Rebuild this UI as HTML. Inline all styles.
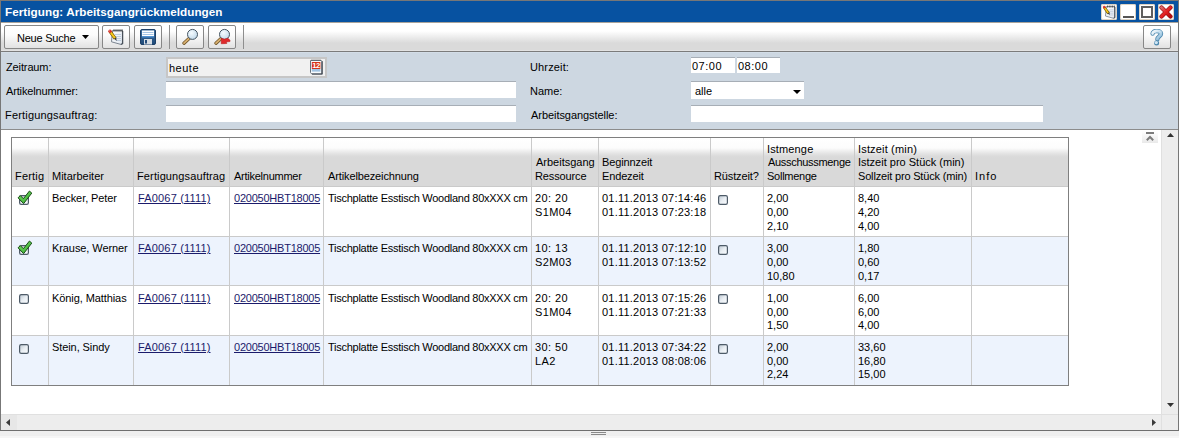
<!DOCTYPE html><html><head><meta charset="utf-8"><style>
*{margin:0;padding:0;box-sizing:border-box}
html,body{width:1179px;height:438px;overflow:hidden;background:#efefef;font-family:"Liberation Sans",sans-serif;font-size:11px;color:#000}
div,svg{position:absolute}
.t{white-space:nowrap;line-height:13px;height:13px}
.lk{color:#1b1b6b;text-decoration:underline}
.tb{height:24px;border:1px solid #878787;border-radius:2px;background:linear-gradient(#fff 0%,#fcfcfc 40%,#e2e2e2 100%)}
.wb{top:4px;width:16px;height:16px;background:#fff;border-radius:2px;box-shadow:inset 0 0 0 1px #ddd3c3}
</style></head><body>
<div style="left:0px;top:0px;width:1179px;height:431px;background:#777"></div>
<div style="left:1px;top:1px;width:1177px;height:21px;background:#0752a1"></div>
<div class="t" style="left:5px;top:5px;color:#fff;font-weight:bold;font-size:11.7px;line-height:14px;height:14px;letter-spacing:0.05px">Fertigung: Arbeitsgangrückmeldungen</div>
<div class="wb" style="left:1101px;top:4px;width:16px;height:16px;"></div>
<div class="wb" style="left:1120px;top:4px;width:16px;height:16px;"></div>
<div class="wb" style="left:1139px;top:4px;width:16px;height:16px;"></div>
<div class="wb" style="left:1158px;top:4px;width:16px;height:16px;"></div>
<div style="left:1123px;top:16px;width:11px;height:2px;background:#555"></div>
<div style="left:1141px;top:6px;width:12px;height:12px;border:2px solid #5e5e5e"></div>
<svg style="left:1159px;top:5px" width="14" height="14" viewBox="0 0 14 14"><defs><linearGradient id="xr" x1="0" y1="0" x2="1" y2="1"><stop offset="0" stop-color="#d86a6a"/><stop offset="0.5" stop-color="#e52222"/><stop offset="1" stop-color="#b30d0d"/></linearGradient></defs><path d="M2.5 2.5 L11.5 11.5 M11.5 2.5 L2.5 11.5" stroke="#9a0d0d" stroke-width="4.2" stroke-linecap="round"/><path d="M2.5 2.5 L11.5 11.5 M11.5 2.5 L2.5 11.5" stroke="url(#xr)" stroke-width="3" stroke-linecap="round"/></svg>
<svg style="left:1101px;top:4px" width="16" height="16" viewBox="-1.8 -1.5 19 19"><defs><linearGradient id="np1101" x1="0" y1="0" x2="1" y2="1"><stop offset="0" stop-color="#ffffff"/><stop offset="1" stop-color="#dfe6ef"/></linearGradient></defs><path d="M4.5 1.5 L14.5 1.5 L14.5 14.2 L13.2 15.5 L3.5 12.8 Z" fill="url(#np1101)" stroke="#7b848f" stroke-width="1"/><path d="M14.6 2 L14.6 14.4 L13.2 15.6" stroke="#48505a" stroke-width="1.3" fill="none"/><path d="M7 5.5h6M7 7.5h6M7 9.5h6M8 11.5h5" stroke="#b4c4d8" stroke-width="0.8"/><path d="M6 0.3v2.4M8 0.3v2.4M10 0.3v2.4M12 0.3v2.4M14 0.3v2.4" stroke="#3c3c3c" stroke-width="1"/><path d="M2.2 2.6 L7.2 9.6" stroke="#6e5400" stroke-width="3.3"/><path d="M2.2 2.6 L7.2 9.6" stroke="#f7c81c" stroke-width="1.9"/><path d="M6 9.4 L8.6 11.9 L8.2 8.4 Z" fill="#3a3a3a"/><circle cx="2" cy="2.2" r="1.7" fill="#d42f28"/><circle cx="1.6" cy="1.8" r="0.6" fill="#f08a80"/></svg>
<div style="left:1px;top:22px;width:1177px;height:30px;background:linear-gradient(#a9a39a 0px,#a9a39a 1px,#fff 1px,#fff 9px,#dadada 21px,#dadada 28px,#e2e2e2 28px,#e2e2e2 29px,#7b7b7b 29px,#7b7b7b 30px)"></div>
<div class="tb" style="left:4px;top:25px;width:95px;height:24px;"></div>
<div id="T0" class="t" style="left:17.00px;top:32px;letter-spacing:-0.222px;">Neue Suche</div>
<svg style="left:82px;top:35px" width="7" height="4" viewBox="0 0 7 4"><path d="M0 0h7L3.5 4z" fill="#000"/></svg>
<div class="tb" style="left:102px;top:25px;width:28px;height:24px;"></div>
<svg style="left:108px;top:29px" width="16" height="16" viewBox="0 0 16 16"><defs><linearGradient id="np108" x1="0" y1="0" x2="1" y2="1"><stop offset="0" stop-color="#ffffff"/><stop offset="1" stop-color="#dfe6ef"/></linearGradient></defs><path d="M4.5 1.5 L14.5 1.5 L14.5 14.2 L13.2 15.5 L3.5 12.8 Z" fill="url(#np108)" stroke="#7b848f" stroke-width="1"/><path d="M14.6 2 L14.6 14.4 L13.2 15.6" stroke="#48505a" stroke-width="1.3" fill="none"/><path d="M7 5.5h6M7 7.5h6M7 9.5h6M8 11.5h5" stroke="#b4c4d8" stroke-width="0.8"/><path d="M6 0.3v2.4M8 0.3v2.4M10 0.3v2.4M12 0.3v2.4M14 0.3v2.4" stroke="#3c3c3c" stroke-width="1"/><path d="M2.2 2.6 L7.2 9.6" stroke="#6e5400" stroke-width="3.3"/><path d="M2.2 2.6 L7.2 9.6" stroke="#f7c81c" stroke-width="1.9"/><path d="M6 9.4 L8.6 11.9 L8.2 8.4 Z" fill="#3a3a3a"/><circle cx="2" cy="2.2" r="1.7" fill="#d42f28"/><circle cx="1.6" cy="1.8" r="0.6" fill="#f08a80"/></svg>
<div class="tb" style="left:134px;top:25px;width:28px;height:24px;"></div>
<svg style="left:140px;top:29px" width="16" height="16" viewBox="0 0 16 16"><defs><linearGradient id="fl" x1="0" y1="0" x2="0" y2="1"><stop offset="0" stop-color="#3d6fa0"/><stop offset="1" stop-color="#1f4a78"/></linearGradient></defs><rect x="0.5" y="0.5" width="15" height="15" rx="1.5" fill="url(#fl)" stroke="#1d3f66"/><rect x="2" y="1.5" width="12" height="6.5" fill="#fff"/><path d="M2.5 3.5h11M2.5 5.5h11" stroke="#9cc0e4" stroke-width="0.9"/><rect x="2" y="7" width="12" height="1.5" fill="#4f90d0"/><rect x="4" y="10" width="8" height="5.5" fill="#d7dde3"/><rect x="5" y="11" width="2" height="3.5" fill="#234c7a"/></svg>
<div style="left:169px;top:25px;width:1px;height:24px;background:#8e8e8e"></div>
<div class="tb" style="left:176px;top:25px;width:28px;height:24px;"></div>
<svg style="left:182px;top:28px" width="18" height="18" viewBox="0 0 18 18"><defs><radialGradient id="lg1" cx="0.4" cy="0.35" r="0.7"><stop offset="0" stop-color="#f6fcff"/><stop offset="1" stop-color="#c0d8ea"/></radialGradient></defs><path d="M7.6 10 L2 15.2" stroke="#6e5328" stroke-width="3.3" stroke-linecap="round"/><path d="M7.6 10 L2 15.2" stroke="#d8b070" stroke-width="1.8" stroke-linecap="round"/><circle cx="10.5" cy="6.4" r="5" fill="url(#lg1)" stroke="#465562" stroke-width="1"/></svg>
<div class="tb" style="left:208px;top:25px;width:28px;height:24px;"></div>
<svg style="left:214px;top:28px" width="18" height="18" viewBox="0 0 18 18"><defs><radialGradient id="lg2" cx="0.4" cy="0.35" r="0.7"><stop offset="0" stop-color="#f6fcff"/><stop offset="1" stop-color="#c0d8ea"/></radialGradient></defs><path d="M7.6 10 L2 15.2" stroke="#6e5328" stroke-width="3.3" stroke-linecap="round"/><path d="M7.6 10 L2 15.2" stroke="#d8b070" stroke-width="1.8" stroke-linecap="round"/><circle cx="10.5" cy="6.4" r="5" fill="url(#lg2)" stroke="#465562" stroke-width="1"/><path d="M7.2 10.1 C8.5 10.6 9.5 11.1 10.3 11.1 C11.6 11.1 12.3 10.2 13.6 10.3 C14.6 10.5 15.4 11.5 16 12.3 L16 13.6 L12.2 14 L12.9 15.5 C11 15.6 9 15.7 7.2 15.8 Z" fill="#df2a2c" stroke="#b21818" stroke-width="0.5"/></svg>
<div style="left:243px;top:25px;width:1px;height:24px;background:#8e8e8e"></div>
<div class="tb" style="left:1143px;top:25px;width:28px;height:24px;"></div>
<svg style="left:1150px;top:29px" width="14" height="17" viewBox="0 0 14 17"><defs><linearGradient id="hq" x1="0" y1="0" x2="1" y2="1"><stop offset="0" stop-color="#f4f9fc"/><stop offset="0.5" stop-color="#c2def0"/><stop offset="1" stop-color="#7fb0d0"/></linearGradient></defs><path d="M2.6 4.6 C2.6 1.2 11 1 11 4.8 C11 7.4 7.4 7.6 7.4 10.2" stroke="#4a86ad" stroke-width="4.4" fill="none" stroke-linecap="round"/><path d="M2.6 4.6 C2.6 1.2 11 1 11 4.8 C11 7.4 7.4 7.6 7.4 10.2" stroke="url(#hq)" stroke-width="2.8" fill="none" stroke-linecap="round"/><circle cx="6.6" cy="13.9" r="2.5" fill="#4a86ad"/><circle cx="6.3" cy="13.6" r="1.7" fill="#cfe5f3"/></svg>
<div style="left:1px;top:52px;width:1177px;height:77px;background:linear-gradient(#d3dde7 0px,#d3dde7 1px,#cdd7e1 1px)"></div>
<div style="left:1px;top:129px;width:1177px;height:1px;background:#8c8c8c"></div>
<div id="T1" class="t" style="left:6.00px;top:61px;letter-spacing:-0.125px;">Zeitraum:</div>
<div id="T2" class="t" style="left:6.00px;top:85px;letter-spacing:-0.154px;">Artikelnummer:</div>
<div id="T3" class="t" style="left:5.00px;top:109px;letter-spacing:0.176px;">Fertigungsauftrag:</div>
<div style="left:166px;top:57px;width:161px;height:21px;background:#f1f1f1;border:2px solid #c6c6c6"></div>
<div id="T4" class="t" style="left:169.00px;top:62px;letter-spacing:0.500px;">heute</div>
<svg style="left:310px;top:59px" width="13" height="16" viewBox="0 0 13 16"><path d="M0.5 1.5 h10.8 l0.8 0.8 v12.7 h-10.3 l-1.3 -1.3 z" fill="#f8fafc" stroke="#6a737c" stroke-width="1"/><path d="M12 2.2 v12.8 h-10" stroke="#3e4650" stroke-width="1.2" fill="none"/><rect x="1.8" y="3" width="8.6" height="7" fill="#d8341a"/><text x="6.1" y="9.4" font-family="Liberation Sans" font-weight="bold" font-size="7.6" fill="#fff" text-anchor="middle" letter-spacing="-0.3">12</text><rect x="1.8" y="10" width="8.6" height="2.6" fill="#9fc3e3"/><path d="M1.5 1h9" stroke="#555" stroke-width="1.1" stroke-dasharray="1 1"/></svg>
<div style="left:166px;top:81px;width:350px;height:17px;background:#fff;border-top:1px solid #a7aeb6"></div>
<div style="left:166px;top:105px;width:350px;height:17px;background:#fff;border-top:1px solid #a7aeb6"></div>
<div id="T5" class="t" style="left:530.00px;top:61px;letter-spacing:0.143px;">Uhrzeit:</div>
<div id="T6" class="t" style="left:530.00px;top:85px;letter-spacing:0.000px;">Name:</div>
<div id="T7" class="t" style="left:531.00px;top:109px;letter-spacing:-0.059px;">Arbeitsgangstelle:</div>
<div style="left:691px;top:57px;width:44px;height:16px;background:#fff;border-top:1px solid #a7aeb6"></div>
<div id="T8" class="t" style="left:692.00px;top:60px;letter-spacing:0.500px;">07:00</div>
<div style="left:737px;top:57px;width:43px;height:16px;background:#fff;border-top:1px solid #a7aeb6"></div>
<div id="T9" class="t" style="left:738.00px;top:60px;letter-spacing:0.500px;">08:00</div>
<div style="left:691px;top:81px;width:113px;height:18px;background:#fff;border-top:1px solid #a7aeb6"></div>
<div id="T10" class="t" style="left:695.00px;top:85px;letter-spacing:0.000px;">alle</div>
<svg style="left:793px;top:90px" width="8" height="4" viewBox="0 0 8 4"><path d="M0 0h8L4 4z" fill="#000"/></svg>
<div style="left:691px;top:105px;width:352px;height:17px;background:#fff;border-top:1px solid #a7aeb6"></div>
<div style="left:1px;top:130px;width:1177px;height:284px;background:#fff"></div>
<div style="left:1161px;top:130px;width:17px;height:284px;background:#ededed;border-left:1px solid #e0e0e0"></div>
<svg style="left:1167px;top:133px" width="7" height="4" viewBox="0 0 7 4"><path d="M0 4h7L3.5 0z" fill="#333"/></svg>
<svg style="left:1167px;top:403px" width="7" height="4" viewBox="0 0 7 4"><path d="M0 0h7L3.5 4z" fill="#333"/></svg>
<div style="left:1142px;top:131px;width:16px;height:12px;background:linear-gradient(#fff,#e9e9e9)"></div>
<div style="left:1146px;top:132px;width:8px;height:2px;background:#7c7c7c"></div>
<svg style="left:1146px;top:135px" width="8" height="6" viewBox="0 0 8 6"><path d="M0.8 5.2 L4 2 L7.2 5.2" stroke="#7c7c7c" stroke-width="2" fill="none"/></svg>
<div style="left:1px;top:414px;width:1177px;height:16px;background:#ededed;border-top:1px solid #e0e0e0"></div>
<div style="left:1px;top:415px;width:16px;height:15px;background:#e7e7e7"></div>
<svg style="left:6px;top:419px" width="4" height="7" viewBox="0 0 4 7"><path d="M4 0v7L0 3.5z" fill="#3a3a3a"/></svg>
<svg style="left:1152px;top:419px" width="4" height="7" viewBox="0 0 4 7"><path d="M0 0v7L4 3.5z" fill="#3a3a3a"/></svg>
<div style="left:1161px;top:414px;width:17px;height:16px;background:#ededed;border-left:1px solid #e0e0e0;border-top:1px solid #e0e0e0"></div>
<div style="left:0px;top:430px;width:1179px;height:1px;background:#6f6f6f"></div>
<div style="left:0px;top:431px;width:1179px;height:7px;background:linear-gradient(#efefef 0px,#efefef 5px,#f6f6f6 5px)"></div>
<div style="left:591px;top:432px;width:15px;height:1px;background:#8a8a8a"></div>
<div style="left:591px;top:434px;width:15px;height:1px;background:#8a8a8a"></div>
<div style="left:12px;top:138px;width:1056px;height:48px;background:linear-gradient(#fff 0px,#fcfcfc 10px,#e6e6e6 15px,#dbdbdb 18px,#d9d9d9 20px,#d9d9d9 48px)"></div>
<div style="left:12px;top:187px;width:1056px;height:49px;background:#fff"></div>
<div style="left:12px;top:237px;width:1056px;height:48px;background:#edf3fd"></div>
<div style="left:12px;top:286px;width:1056px;height:49px;background:#fff"></div>
<div style="left:12px;top:336px;width:1056px;height:49px;background:#edf3fd"></div>
<div style="left:48px;top:138px;width:1px;height:247px;background:#cacaca"></div>
<div style="left:133px;top:138px;width:1px;height:247px;background:#cacaca"></div>
<div style="left:229px;top:138px;width:1px;height:247px;background:#cacaca"></div>
<div style="left:323px;top:138px;width:1px;height:247px;background:#cacaca"></div>
<div style="left:531px;top:138px;width:1px;height:247px;background:#cacaca"></div>
<div style="left:598px;top:138px;width:1px;height:247px;background:#cacaca"></div>
<div style="left:710px;top:138px;width:1px;height:247px;background:#cacaca"></div>
<div style="left:763px;top:138px;width:1px;height:247px;background:#cacaca"></div>
<div style="left:854px;top:138px;width:1px;height:247px;background:#cacaca"></div>
<div style="left:971px;top:138px;width:1px;height:247px;background:#cacaca"></div>
<div style="left:12px;top:186px;width:1056px;height:1px;background:#cacaca"></div>
<div style="left:12px;top:236px;width:1056px;height:1px;background:#cacaca"></div>
<div style="left:12px;top:285px;width:1056px;height:1px;background:#cacaca"></div>
<div style="left:12px;top:335px;width:1056px;height:1px;background:#cacaca"></div>
<div style="left:11px;top:137px;width:1058px;height:249px;border:1px solid #7f7f7f"></div>
<div id="T11" class="t" style="left:15.00px;top:170px;letter-spacing:0.200px;">Fertig</div>
<div id="T12" class="t" style="left:52.00px;top:170px;letter-spacing:0.000px;">Mitarbeiter</div>
<div id="T13" class="t" style="left:137.00px;top:170px;letter-spacing:0.125px;">Fertigungsauftrag</div>
<div id="T14" class="t" style="left:234.00px;top:170px;letter-spacing:-0.250px;">Artikelnummer</div>
<div id="T15" class="t" style="left:328.00px;top:170px;letter-spacing:-0.118px;">Artikelbezeichnung</div>
<div id="T16" class="t" style="left:536.00px;top:156px;letter-spacing:0.000px;">Arbeitsgang</div>
<div id="T17" class="t" style="left:535.00px;top:170px;letter-spacing:-0.125px;">Ressource</div>
<div id="T18" class="t" style="left:602.00px;top:156px;letter-spacing:-0.111px;">Beginnzeit</div>
<div id="T19" class="t" style="left:602.00px;top:170px;letter-spacing:-0.143px;">Endezeit</div>
<div id="T20" class="t" style="left:714.00px;top:170px;letter-spacing:-0.125px;">Rüstzeit?</div>
<div id="T21" class="t" style="left:767.00px;top:143px;letter-spacing:0.143px;">Istmenge</div>
<div id="T22" class="t" style="left:768.00px;top:156px;letter-spacing:-0.308px;">Ausschussmenge</div>
<div id="T23" class="t" style="left:767.00px;top:170px;letter-spacing:-0.250px;">Sollmenge</div>
<div id="T24" class="t" style="left:858.00px;top:143px;letter-spacing:0.167px;">Istzeit (min)</div>
<div id="T25" class="t" style="left:858.00px;top:156px;letter-spacing:0.000px;">Istzeit pro Stück (min)</div>
<div id="T26" class="t" style="left:858.00px;top:170px;letter-spacing:-0.174px;">Sollzeit pro Stück (min)</div>
<div id="T27" class="t" style="left:975.00px;top:170px;letter-spacing:1.000px;">Info</div>
<svg style="left:19px;top:195px" width="10" height="10" viewBox="0 0 10 10"><defs><linearGradient id="cbg" x1="0" y1="0" x2="1" y2="1"><stop offset="0" stop-color="#bcc6d0"/><stop offset="0.5" stop-color="#e9eef3"/><stop offset="1" stop-color="#fbfdff"/></linearGradient></defs><rect x="0.6" y="0.6" width="8.8" height="8.8" rx="1.6" fill="url(#cbg)" stroke="#4e5b68" stroke-width="1.2"/></svg>
<svg style="left:16px;top:189px" width="17" height="16" viewBox="0 0 17 16"><defs><linearGradient id="ckg" x1="0" y1="0" x2="1" y2="1"><stop offset="0" stop-color="#7fe06a"/><stop offset="1" stop-color="#2fa82a"/></linearGradient></defs><path d="M2.05 8.8 L4.3 6.6 L7.4 9.7 L13.4 2.05 L15.8 4.1 L7.6 14.6 Z" fill="url(#ckg)" stroke="#174a14" stroke-width="1" stroke-linejoin="round"/></svg>
<svg style="left:718px;top:195px" width="10" height="10" viewBox="0 0 10 10"><defs><linearGradient id="cbg" x1="0" y1="0" x2="1" y2="1"><stop offset="0" stop-color="#bcc6d0"/><stop offset="0.5" stop-color="#e9eef3"/><stop offset="1" stop-color="#fbfdff"/></linearGradient></defs><rect x="0.6" y="0.6" width="8.8" height="8.8" rx="1.6" fill="url(#cbg)" stroke="#4e5b68" stroke-width="1.2"/></svg>
<div id="T28" class="t" style="left:52.00px;top:192px;letter-spacing:-0.083px;">Becker, Peter</div>
<div id="T29" class="t lk" style="left:138.00px;top:192px;letter-spacing:0.167px;">FA0067 (1111)</div>
<div id="T30" class="t lk" style="left:234.00px;top:192px;letter-spacing:-0.231px;">020050HBT18005</div>
<div id="T31" class="t" style="left:328.00px;top:192px;letter-spacing:-0.263px;">Tischplatte Esstisch Woodland 80xXXX cm</div>
<div id="T32" class="t" style="left:535.00px;top:192px;letter-spacing:0.400px;">20: 20</div>
<div id="T33" class="t" style="left:535.00px;top:206px;letter-spacing:0.400px;">S1M04</div>
<div id="T34" class="t" style="left:602.00px;top:192px;letter-spacing:0.222px;">01.11.2013 07:14:46</div>
<div id="T35" class="t" style="left:602.00px;top:206px;letter-spacing:0.222px;">01.11.2013 07:23:18</div>
<div id="T36" class="t" style="left:767.00px;top:192px;letter-spacing:0.000px;">2,00</div>
<div id="T37" class="t" style="left:767.00px;top:206px;letter-spacing:0.000px;">0,00</div>
<div id="T38" class="t" style="left:767.00px;top:220px;letter-spacing:0.000px;">2,10</div>
<div id="T39" class="t" style="left:858.00px;top:192px;letter-spacing:0.000px;">8,40</div>
<div id="T40" class="t" style="left:858.00px;top:206px;letter-spacing:0.000px;">4,20</div>
<div id="T41" class="t" style="left:858.00px;top:220px;letter-spacing:0.000px;">4,00</div>
<svg style="left:19px;top:245px" width="10" height="10" viewBox="0 0 10 10"><defs><linearGradient id="cbg" x1="0" y1="0" x2="1" y2="1"><stop offset="0" stop-color="#bcc6d0"/><stop offset="0.5" stop-color="#e9eef3"/><stop offset="1" stop-color="#fbfdff"/></linearGradient></defs><rect x="0.6" y="0.6" width="8.8" height="8.8" rx="1.6" fill="url(#cbg)" stroke="#4e5b68" stroke-width="1.2"/></svg>
<svg style="left:16px;top:239px" width="17" height="16" viewBox="0 0 17 16"><defs><linearGradient id="ckg" x1="0" y1="0" x2="1" y2="1"><stop offset="0" stop-color="#7fe06a"/><stop offset="1" stop-color="#2fa82a"/></linearGradient></defs><path d="M2.05 8.8 L4.3 6.6 L7.4 9.7 L13.4 2.05 L15.8 4.1 L7.6 14.6 Z" fill="url(#ckg)" stroke="#174a14" stroke-width="1" stroke-linejoin="round"/></svg>
<svg style="left:718px;top:245px" width="10" height="10" viewBox="0 0 10 10"><defs><linearGradient id="cbg" x1="0" y1="0" x2="1" y2="1"><stop offset="0" stop-color="#bcc6d0"/><stop offset="0.5" stop-color="#e9eef3"/><stop offset="1" stop-color="#fbfdff"/></linearGradient></defs><rect x="0.6" y="0.6" width="8.8" height="8.8" rx="1.6" fill="url(#cbg)" stroke="#4e5b68" stroke-width="1.2"/></svg>
<div id="T42" class="t" style="left:52.00px;top:242px;letter-spacing:-0.083px;">Krause, Werner</div>
<div id="T43" class="t lk" style="left:138.00px;top:242px;letter-spacing:0.167px;">FA0067 (1111)</div>
<div id="T44" class="t lk" style="left:234.00px;top:242px;letter-spacing:-0.231px;">020050HBT18005</div>
<div id="T45" class="t" style="left:328.00px;top:242px;letter-spacing:-0.263px;">Tischplatte Esstisch Woodland 80xXXX cm</div>
<div id="T46" class="t" style="left:535.00px;top:242px;letter-spacing:0.400px;">10: 13</div>
<div id="T47" class="t" style="left:535.00px;top:256px;letter-spacing:0.400px;">S2M03</div>
<div id="T48" class="t" style="left:602.00px;top:242px;letter-spacing:0.222px;">01.11.2013 07:12:10</div>
<div id="T49" class="t" style="left:602.00px;top:256px;letter-spacing:0.222px;">01.11.2013 07:13:52</div>
<div id="T50" class="t" style="left:767.00px;top:242px;letter-spacing:0.000px;">3,00</div>
<div id="T51" class="t" style="left:767.00px;top:256px;letter-spacing:0.000px;">0,00</div>
<div id="T52" class="t" style="left:767.00px;top:270px;letter-spacing:0.000px;">10,80</div>
<div id="T53" class="t" style="left:858.00px;top:242px;letter-spacing:0.000px;">1,80</div>
<div id="T54" class="t" style="left:858.00px;top:256px;letter-spacing:0.000px;">0,60</div>
<div id="T55" class="t" style="left:858.00px;top:270px;letter-spacing:0.000px;">0,17</div>
<svg style="left:19px;top:294px" width="10" height="10" viewBox="0 0 10 10"><defs><linearGradient id="cbg" x1="0" y1="0" x2="1" y2="1"><stop offset="0" stop-color="#bcc6d0"/><stop offset="0.5" stop-color="#e9eef3"/><stop offset="1" stop-color="#fbfdff"/></linearGradient></defs><rect x="0.6" y="0.6" width="8.8" height="8.8" rx="1.6" fill="url(#cbg)" stroke="#4e5b68" stroke-width="1.2"/></svg>
<svg style="left:718px;top:294px" width="10" height="10" viewBox="0 0 10 10"><defs><linearGradient id="cbg" x1="0" y1="0" x2="1" y2="1"><stop offset="0" stop-color="#bcc6d0"/><stop offset="0.5" stop-color="#e9eef3"/><stop offset="1" stop-color="#fbfdff"/></linearGradient></defs><rect x="0.6" y="0.6" width="8.8" height="8.8" rx="1.6" fill="url(#cbg)" stroke="#4e5b68" stroke-width="1.2"/></svg>
<div id="T56" class="t" style="left:52.00px;top:292px;letter-spacing:-0.083px;">König, Matthias</div>
<div id="T57" class="t lk" style="left:138.00px;top:292px;letter-spacing:0.167px;">FA0067 (1111)</div>
<div id="T58" class="t lk" style="left:234.00px;top:292px;letter-spacing:-0.231px;">020050HBT18005</div>
<div id="T59" class="t" style="left:328.00px;top:292px;letter-spacing:-0.263px;">Tischplatte Esstisch Woodland 80xXXX cm</div>
<div id="T60" class="t" style="left:535.00px;top:292px;letter-spacing:0.400px;">20: 20</div>
<div id="T61" class="t" style="left:535.00px;top:306px;letter-spacing:0.400px;">S1M04</div>
<div id="T62" class="t" style="left:602.00px;top:292px;letter-spacing:0.222px;">01.11.2013 07:15:26</div>
<div id="T63" class="t" style="left:602.00px;top:306px;letter-spacing:0.222px;">01.11.2013 07:21:33</div>
<div id="T64" class="t" style="left:767.00px;top:292px;letter-spacing:0.000px;">1,00</div>
<div id="T65" class="t" style="left:767.00px;top:306px;letter-spacing:0.000px;">0,00</div>
<div id="T66" class="t" style="left:767.00px;top:319px;letter-spacing:0.000px;">1,50</div>
<div id="T67" class="t" style="left:858.00px;top:292px;letter-spacing:0.000px;">6,00</div>
<div id="T68" class="t" style="left:858.00px;top:306px;letter-spacing:0.000px;">6,00</div>
<div id="T69" class="t" style="left:858.00px;top:319px;letter-spacing:0.000px;">4,00</div>
<svg style="left:19px;top:344px" width="10" height="10" viewBox="0 0 10 10"><defs><linearGradient id="cbg" x1="0" y1="0" x2="1" y2="1"><stop offset="0" stop-color="#bcc6d0"/><stop offset="0.5" stop-color="#e9eef3"/><stop offset="1" stop-color="#fbfdff"/></linearGradient></defs><rect x="0.6" y="0.6" width="8.8" height="8.8" rx="1.6" fill="url(#cbg)" stroke="#4e5b68" stroke-width="1.2"/></svg>
<svg style="left:718px;top:344px" width="10" height="10" viewBox="0 0 10 10"><defs><linearGradient id="cbg" x1="0" y1="0" x2="1" y2="1"><stop offset="0" stop-color="#bcc6d0"/><stop offset="0.5" stop-color="#e9eef3"/><stop offset="1" stop-color="#fbfdff"/></linearGradient></defs><rect x="0.6" y="0.6" width="8.8" height="8.8" rx="1.6" fill="url(#cbg)" stroke="#4e5b68" stroke-width="1.2"/></svg>
<div id="T70" class="t" style="left:52.00px;top:341px;letter-spacing:-0.083px;">Stein, Sindy</div>
<div id="T71" class="t lk" style="left:138.00px;top:341px;letter-spacing:0.167px;">FA0067 (1111)</div>
<div id="T72" class="t lk" style="left:234.00px;top:341px;letter-spacing:-0.231px;">020050HBT18005</div>
<div id="T73" class="t" style="left:328.00px;top:341px;letter-spacing:-0.263px;">Tischplatte Esstisch Woodland 80xXXX cm</div>
<div id="T74" class="t" style="left:535.00px;top:341px;letter-spacing:0.400px;">30: 50</div>
<div id="T75" class="t" style="left:535.00px;top:355px;letter-spacing:0.400px;">LA2</div>
<div id="T76" class="t" style="left:602.00px;top:341px;letter-spacing:0.222px;">01.11.2013 07:34:22</div>
<div id="T77" class="t" style="left:602.00px;top:355px;letter-spacing:0.222px;">01.11.2013 08:08:06</div>
<div id="T78" class="t" style="left:767.00px;top:341px;letter-spacing:0.000px;">2,00</div>
<div id="T79" class="t" style="left:767.00px;top:355px;letter-spacing:0.000px;">0,00</div>
<div id="T80" class="t" style="left:767.00px;top:368px;letter-spacing:0.000px;">2,24</div>
<div id="T81" class="t" style="left:858.00px;top:341px;letter-spacing:0.000px;">33,60</div>
<div id="T82" class="t" style="left:858.00px;top:355px;letter-spacing:0.000px;">16,80</div>
<div id="T83" class="t" style="left:858.00px;top:368px;letter-spacing:0.000px;">15,00</div>
</body></html>
